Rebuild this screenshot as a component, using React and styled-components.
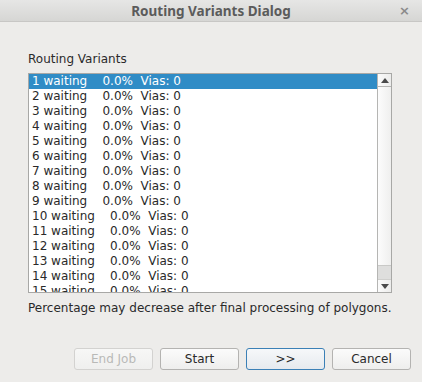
import React from "react";
import styled, { createGlobalStyle } from "styled-components";

const Global = createGlobalStyle`
  html, body { margin: 0; padding: 0; background: #edecea; }
  * { box-sizing: border-box; }
`;

const Dialog = styled.div`
  width: 422px;
  height: 382px;
  display: flex;
  flex-direction: column;
  background: #edecea;
  font-family: "DejaVu Sans", sans-serif;
  font-size: 12px;
  color: #2a2a2a;
`;

const TitleBar = styled.div`
  height: 22px;
  flex: none;
  position: relative;
  display: flex;
  align-items: center;
  justify-content: center;
  background: linear-gradient(#e6e6e5, #d6d6d4);
  border-bottom: 1px solid #c8c7c5;
`;

const Title = styled.div`
  font-family: "Noto Sans", sans-serif;
  font-weight: 700;
  font-size: 13.5px;
  color: #5b5b5b;
`;

const Close = styled.div`
  position: absolute;
  right: 12px;
  top: 3px;
  font-family: "DejaVu Sans", sans-serif;
  font-size: 13px;
  font-weight: bold;
  color: #8a8a8a;
`;

const Content = styled.div`
  flex: 1;
  display: flex;
  flex-direction: column;
  padding: 30px 11px 0 28px;
`;

const Label = styled.div`
  line-height: 15px;
  height: 15px;
  margin-bottom: 6px;
`;

const ListBox = styled.div`
  width: 364px;
  height: 220px;
  border: 1px solid #a8a8a6;
  background: #fff;
  display: flex;
  overflow: hidden;
`;

const Rows = styled.div`
  flex: 1;
  overflow: hidden;
`;

const Row = styled.div`
  height: 15px;
  line-height: 15px;
  padding-left: 3px;
  white-space: pre;
  background: ${(p) => (p.$selected ? "#308cc6" : "transparent")};
  color: ${(p) => (p.$selected ? "#ffffff" : "#2a2a2a")};
`;

const Scrollbar = styled.div`
  width: 14px;
  flex: none;
  display: flex;
  flex-direction: column;
  border-left: 1px solid #b5b5b3;
  background: #dcdcdb;
`;

const Arrow = styled.div`
  height: 13px;
  flex: none;
  display: flex;
  align-items: center;
  justify-content: center;
  background: linear-gradient(90deg, #fbfbfb, #ececeb);
  border-bottom: ${(p) => (p.$up ? "1px solid #b5b5b3" : "none")};
  border-top: ${(p) => (p.$up ? "none" : "1px solid #cfcfcd")};
`;

const Thumb = styled.div`
  height: 179px;
  flex: none;
  background: linear-gradient(90deg, #fcfcfc, #efefee);
  border-bottom: 1px solid #c9c9c7;
`;

const Track = styled.div`
  flex: 1;
  background: #dededd;
`;

const Note = styled.div`
  margin-top: 8px;
  line-height: 15px;
  height: 15px;
`;

const Buttons = styled.div`
  margin-top: 32px;
  display: flex;
  justify-content: flex-end;
  gap: 7px;
`;

const Button = styled.div`
  width: 79px;
  height: 22px;
  border-radius: 3px;
  display: flex;
  align-items: center;
  justify-content: center;
  font-size: 12px;
  border: 1px solid ${(p) => (p.$default ? "#3b80b6" : p.$disabled ? "#d3d2d0" : "#b4b3b1")};
  background: ${(p) =>
    p.$default
      ? "linear-gradient(#f6f8fa, #e6eaee)"
      : p.$disabled
      ? "linear-gradient(#f7f7f6, #efefee)"
      : "linear-gradient(#fbfbfb, #eeeeed)"};
  color: ${(p) => (p.$disabled ? "#b9b9b7" : "#2a2a2a")};
`;

const UpTri = () => (
  <svg width="8" height="5" viewBox="0 0 8 5">
    <path d="M0 5 L4 0 L8 5 Z" fill="#4a4a4a" />
  </svg>
);
const DownTri = () => (
  <svg width="8" height="5" viewBox="0 0 8 5">
    <path d="M0 0 L4 5 L8 0 Z" fill="#4a4a4a" />
  </svg>
);

export default function App() {
  const rows = Array.from({ length: 15 }, (_, i) => `${i + 1} waiting    0.0%  Vias: 0`);
  return (
    <>
      <Global />
      <Dialog>
        <TitleBar>
          <Title>Routing Variants Dialog</Title>
          <Close>×</Close>
        </TitleBar>
        <Content>
          <Label>Routing Variants</Label>
          <ListBox>
            <Rows>
              {rows.map((r, i) => (
                <Row key={i} $selected={i === 0}>
                  {r}
                </Row>
              ))}
            </Rows>
            <Scrollbar>
              <Arrow $up>
                <UpTri />
              </Arrow>
              <Thumb />
              <Track />
              <Arrow>
                <DownTri />
              </Arrow>
            </Scrollbar>
          </ListBox>
          <Note>Percentage may decrease after final processing of polygons.</Note>
          <Buttons>
            <Button $disabled>End Job</Button>
            <Button>Start</Button>
            <Button $default>&gt;&gt;</Button>
            <Button>Cancel</Button>
          </Buttons>
        </Content>
      </Dialog>
    </>
  );
}
